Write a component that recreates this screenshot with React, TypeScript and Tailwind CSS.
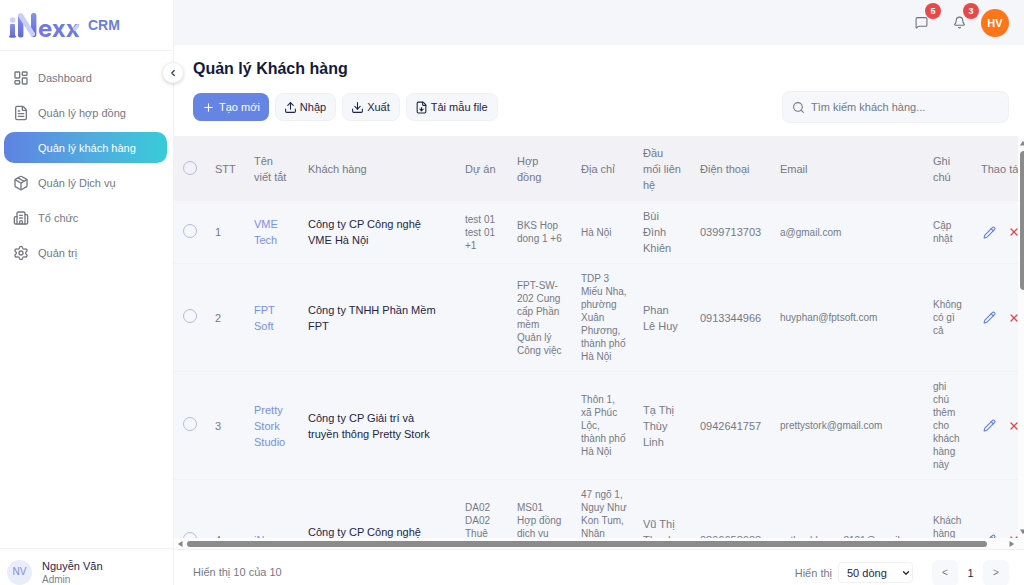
import { useState } from "react";
import {
  Bell,
  Building2,
  ChevronDown,
  ChevronLeft,
  Download,
  FileDown,
  FileText,
  LayoutDashboard,
  MessageSquare,
  Package,
  Pencil,
  Plus,
  Search,
  Settings,
  Upload,
  X,
} from "lucide-react";

type Customer = {
  id: number;
  shortName: string;
  name: string;
  projects: string;
  contracts: string;
  address: string;
  contact: string;
  phone: string;
  email: string;
  note: string;
};

const menu = [
  { label: "Dashboard", icon: LayoutDashboard },
  { label: "Quản lý hợp đồng", icon: FileText },
  { label: "Quản lý khách hàng", icon: null },
  { label: "Quản lý Dịch vụ", icon: Package },
  { label: "Tổ chức", icon: Building2 },
  { label: "Quản trị", icon: Settings },
];

const actions = [
  { label: "Nhập", icon: Upload },
  { label: "Xuất", icon: Download },
  { label: "Tải mẫu file", icon: FileDown },
];

const headings = [
  "STT",
  "Tên\nviết tắt",
  "Khách hàng",
  "Dự án",
  "Hợp\nđồng",
  "Địa chỉ",
  "Đầu\nmối liên\nhệ",
  "Điện thoại",
  "Email",
  "Ghi\nchú",
  "Thao tác",
];

const customers: Customer[] = [
  {
    id: 1,
    shortName: "VME\nTech",
    name: "Công ty CP Công nghệ\nVME Hà Nội",
    projects: "test 01\ntest 01\n+1",
    contracts: "BKS Hop\ndong 1 +6",
    address: "Hà Nội",
    contact: "Bùi\nĐình\nKhiên",
    phone: "0399713703",
    email: "a@gmail.com",
    note: "Cập\nnhật",
  },
  {
    id: 2,
    shortName: "FPT\nSoft",
    name: "Công ty TNHH Phần Mềm\nFPT",
    projects: "",
    contracts: "FPT-SW-\n202 Cung\ncấp Phần\nmềm\nQuản lý\nCông việc",
    address: "TDP 3\nMiếu Nha,\nphường\nXuân\nPhương,\nthành phố\nHà Nội",
    contact: "Phan\nLê Huy",
    phone: "0913344966",
    email: "huyphan@fptsoft.com",
    note: "Không\ncó gì\ncả",
  },
  {
    id: 3,
    shortName: "Pretty\nStork\nStudio",
    name: "Công ty CP Giải trí và\ntruyền thông Pretty Stork",
    projects: "",
    contracts: "",
    address: "Thôn 1,\nxã Phúc\nLộc,\nthành phố\nHà Nội",
    contact: "Tạ Thị\nThùy\nLinh",
    phone: "0942641757",
    email: "prettystork@gmail.com",
    note: "ghi\nchú\nthêm\ncho\nkhách\nhàng\nnày",
  },
  {
    id: 4,
    shortName: "iNexx",
    name: "Công ty CP Công nghệ\niNexx",
    projects: "DA02\nDA02\nThuê\ndịch vụ\nphần\nmềm",
    contracts: "MS01\nHợp đồng\ndịch vụ\nphần\nmềm\n+2",
    address: "47 ngõ 1,\nNguy Như\nKon Tum,\nNhân\nChính,\nThanh\nXuân,\nHà Nội",
    contact: "Vũ Thị\nThanh\nHương",
    phone: "0896658688",
    email: "vuthanhhuong8181@gmail.com",
    note: "Khách\nhàng\nthân\nthiết",
  },
];

function Logo() {
  return (
    <svg width="76" height="36" viewBox="0 -4 76 36" role="img" aria-label="iNexx">
      <defs>
        <linearGradient id="stem" x1="0" y1="0" x2="0" y2="1">
          <stop offset="0" stopColor="#8493ea" />
          <stop offset="1" stopColor="#6368d6" />
        </linearGradient>
      </defs>
      <circle cx="4.6" cy="9" r="2.7" fill="#c9cff8" />
      <rect x="2" y="13" width="5" height="13.500" rx="1" fill="url(#stem)" />
      <rect x="1" y="24.500" width="7" height="2" rx="1" fill="#6368d6" />
      <rect x="10" y="3" width="5.400" height="23.500" rx="2" fill="url(#stem)" />
      <rect x="23" y="2" width="5.400" height="24" rx="2.600" fill="url(#stem)" />
      <line x1="12.600" y1="4.600" x2="24.600" y2="23" stroke="#c9cff8" strokeWidth="5" strokeLinecap="round" />
      <text x="30" y="26" fontSize="24" fontWeight="700" fontFamily="Inter, sans-serif" fill="#7079df">
        exx
      </text>
      <line x1="69.500" y1="14.800" x2="66.800" y2="18" stroke="#c9cff8" strokeWidth="3.600" strokeLinecap="round" />
    </svg>
  );
}

function Sidebar() {
  return (
    <aside className="relative flex w-[174px] shrink-0 flex-col border-r border-[#f1f1f4] bg-white">
      <div className="flex h-[51px] shrink-0 items-center gap-1 border-b border-[#f1f1f4] pl-2">
        <Logo />
        <span className="text-[14px] leading-4 font-bold text-[#6b80dc]">CRM</span>
      </div>
      <button
        type="button"
        aria-label="Thu gọn"
        className="absolute top-[63px] -right-[10px] z-10 flex size-5 items-center justify-center rounded-full bg-white text-[#334155] shadow-[0_1px_4px_rgba(0,0,0,0.22)]"
      >
        <ChevronLeft size={10} strokeWidth={3} />
      </button>
      <nav className="flex flex-1 flex-col gap-1 pt-[11px] pr-[6px] pl-1">
        {menu.map(({ label, icon: Icon }) => (
          <a
            key={label}
            href="#"
            className={
              Icon
                ? "flex h-[31px] items-center gap-[9px] rounded-[10px] pl-[9px] text-[#737883]"
                : "flex h-[31px] items-center gap-[9px] rounded-[10px] bg-linear-to-r from-[#5f82e2] to-[#35ccd9] pl-[9px] text-white"
            }
          >
            <span className="flex w-4 shrink-0">{Icon && <Icon size={16} strokeWidth={2} />}</span>
            {label}
          </a>
        ))}
      </nav>
      <div className="flex h-[37px] shrink-0 items-start border-t border-[#f1f1f4] pt-[9px] pl-[7px]">
        <div className="flex items-center gap-[10px]">
          <span className="flex size-[25px] items-center justify-center rounded-full bg-[#e9ecf9] text-[10px] text-[#7b8fe0]">
            NV
          </span>
          <div>
            <p className="leading-4 text-[#1d2548]">Nguyễn Văn</p>
            <p className="text-[10px] leading-3 text-[#7c818c]">Admin</p>
          </div>
        </div>
      </div>
    </aside>
  );
}

const badge =
  "absolute -top-[13px] left-[10px] flex size-4 items-center justify-center rounded-full bg-[#ec4747] text-[9px] leading-none font-bold text-white";

function TopBar() {
  return (
    <header className="flex h-[45px] shrink-0 items-center justify-end bg-[#f5f6f9] pr-[15px]">
      <button type="button" aria-label="Tin nhắn" className="relative mr-[25px] text-[#6b7280]">
        <MessageSquare size={13} />
        <span className={badge}>5</span>
      </button>
      <button type="button" aria-label="Thông báo" className="relative mr-[15px] text-[#6b7280]">
        <Bell size={13} />
        <span className={badge}>3</span>
      </button>
      <span className="flex size-7 items-center justify-center rounded-full bg-[#ff7519] font-bold text-white">
        HV
      </span>
    </header>
  );
}

function CustomerTable() {
  const [selected, setSelected] = useState<number[]>([]);
  const tick =
    "block size-[14px] appearance-none rounded-full border border-[#b3bae6] checked:bg-[#6785e4]";
  const small = "px-2 py-2 text-[10px] leading-[13px] whitespace-pre-line";
  const normal = "px-2 py-[7px] whitespace-pre-line";

  const toggle = (id: number) =>
    setSelected((ids) => (ids.includes(id) ? ids.filter((v) => v !== id) : [...ids, id]));

  return (
    <table className="w-full min-w-[868px] table-fixed border-collapse text-left text-[#757987]">
      <colgroup>
        <col className="w-[33px]" />
        <col className="w-[39px]" />
        <col className="w-[54px]" />
        <col className="w-[157px]" />
        <col className="w-[52px]" />
        <col className="w-[64px]" />
        <col className="w-[62px]" />
        <col className="w-[57px]" />
        <col className="w-[80px]" />
        <col className="w-[153px]" />
        <col className="w-[48px]" />
        <col />
      </colgroup>
      <thead className="bg-[#f1f1f6]">
        <tr>
          <th className="pb-[2px] pl-[9px]">
            <input
              type="checkbox"
              aria-label="Chọn tất cả"
              className={tick}
              checked={selected.length === customers.length}
              onChange={() =>
                setSelected(selected.length === customers.length ? [] : customers.map((c) => c.id))
              }
            />
          </th>
          {headings.map((heading) => (
            <th key={heading} className="px-2 pt-[9px] pb-2 font-normal whitespace-pre-line">
              {heading}
            </th>
          ))}
        </tr>
      </thead>
      <tbody className="bg-[#f5f7fa]">
        {customers.map((c) => (
          <tr key={c.id} className="border-b border-[#f0f1f5]">
            <td className="pb-[3px] pl-[9px]">
              <input
                type="checkbox"
                aria-label={`Chọn ${c.name}`}
                className={tick}
                checked={selected.includes(c.id)}
                onChange={() => toggle(c.id)}
              />
            </td>
            <td className={normal}>{c.id}</td>
            <td className={normal}>
              <a href="#" className="text-[#7890e3]">
                {c.shortName}
              </a>
            </td>
            <td className="px-2 py-[7px] whitespace-pre-line text-[#1d2548]">{c.name}</td>
            <td className={small}>{c.projects}</td>
            <td className={small}>{c.contracts}</td>
            <td className={small}>{c.address}</td>
            <td className={normal}>{c.contact}</td>
            <td className={normal}>{c.phone}</td>
            <td className={small}>{c.email}</td>
            <td className={small}>{c.note}</td>
            <td className="pl-[10px]">
              <div className="flex items-center gap-3">
                <button type="button" aria-label="Sửa" className="text-[#5f80de]">
                  <Pencil size={13} strokeWidth={2} />
                </button>
                <button type="button" aria-label="Xóa" className="text-[#e04545]">
                  <X size={12} strokeWidth={2.5} />
                </button>
              </div>
            </td>
          </tr>
        ))}
      </tbody>
    </table>
  );
}

function Arrow({ className }: { className: string }) {
  return (
    <svg width="6" height="6" viewBox="0 0 6 6" className={className} aria-hidden="true">
      <path d="M0 5.500L3 0.800L6 5.500z" fill="#858585" />
    </svg>
  );
}

export default function App() {
  return (
    <div className="flex h-screen overflow-hidden bg-white font-['Liberation_Sans',Arial,sans-serif] text-[11px] leading-4">
      <Sidebar />
      <main className="flex min-w-0 flex-1 flex-col">
        <TopBar />
        <section className="shrink-0 pt-3 pr-[15px] pb-[13px] pl-[19px]">
          <h1 className="text-[16px] leading-6 font-bold text-[#131b3d]">Quản lý Khách hàng</h1>
          <div className="mt-[10px] flex items-center justify-between">
            <div className="flex gap-[6px]">
              <button
                type="button"
                className="flex h-7 items-center gap-1 rounded-lg bg-[#6684e3] px-[9px] text-white"
              >
                <Plus size={13} />
                Tạo mới
              </button>
              {actions.map(({ label, icon: Icon }) => (
                <button
                  key={label}
                  type="button"
                  className="flex h-7 items-center gap-[3px] rounded-lg border border-[#f0f1f5] bg-[#f5f7fa] pr-[9px] pl-2 text-[#1d2548]"
                >
                  <Icon size={13} />
                  {label}
                </button>
              ))}
            </div>
            <label className="flex h-8 w-[227px] items-center gap-[6px] rounded-lg border border-[#f0f1f5] bg-[#f5f7fa] px-[9px] text-[#737883]">
              <Search size={13} className="shrink-0" />
              <input
                type="text"
                aria-label="Tìm kiếm khách hàng"
                placeholder="Tìm kiếm khách hàng..."
                className="w-full bg-transparent outline-none placeholder:text-[#737883]"
              />
            </label>
          </div>
        </section>

        <div className="flex min-h-0 flex-1">
          <div className="min-w-0 flex-1 overflow-auto [scrollbar-width:none]">
            <CustomerTable />
          </div>
          <div className="flex w-[6px] shrink-0 flex-col items-end overflow-hidden bg-[#fcfcfc] pt-1 pb-[3px]">
            <Arrow className="-mr-[2px] shrink-0" />
            <div className="mt-[5px] h-[139px] w-1 rounded-l-full bg-[#8b8b8b]" />
            <Arrow className="mt-auto -mr-[2px] shrink-0 rotate-180" />
          </div>
        </div>
        <div className="flex h-[11px] shrink-0 items-center bg-[#fcfcfc] pr-[9px] pl-[3px]">
          <Arrow className="-rotate-90" />
          <div className="mr-[22px] ml-1 h-[6px] flex-1 rounded-full bg-[#8b8b8b]" />
          <Arrow className="rotate-90" />
        </div>

        <footer className="flex h-9 shrink-0 items-start justify-between border-t border-[#f1f1f4] pt-[9px] pr-[15px] pl-[19px] text-[#757987]">
          <p className="leading-[27px]">Hiển thị 10 của 10</p>
          <div className="flex h-[27px] items-center">
            <label htmlFor="page-size">Hiển thị</label>
            <div className="relative mr-[19px] ml-[6px]">
              <select
                id="page-size"
                className="block h-[21px] w-[75px] appearance-none rounded border border-[#f0f1f5] bg-white pl-2 text-[#1d2548]"
              >
                <option>50 dòng</option>
              </select>
              <ChevronDown
                size={10}
                strokeWidth={3}
                className="pointer-events-none absolute top-[6px] right-[2px] text-[#1f2937]"
              />
            </div>
            <button
              type="button"
              aria-label="Trang trước"
              className="size-[26px] rounded-md bg-[#f6f8fb] text-[10px]"
            >
              &lt;
            </button>
            <span className="w-[25px] text-center text-[#1d2548]">1</span>
            <button
              type="button"
              aria-label="Trang sau"
              className="size-[26px] rounded-md bg-[#f6f8fb] text-[10px]"
            >
              &gt;
            </button>
          </div>
        </footer>
      </main>
    </div>
  );
}
